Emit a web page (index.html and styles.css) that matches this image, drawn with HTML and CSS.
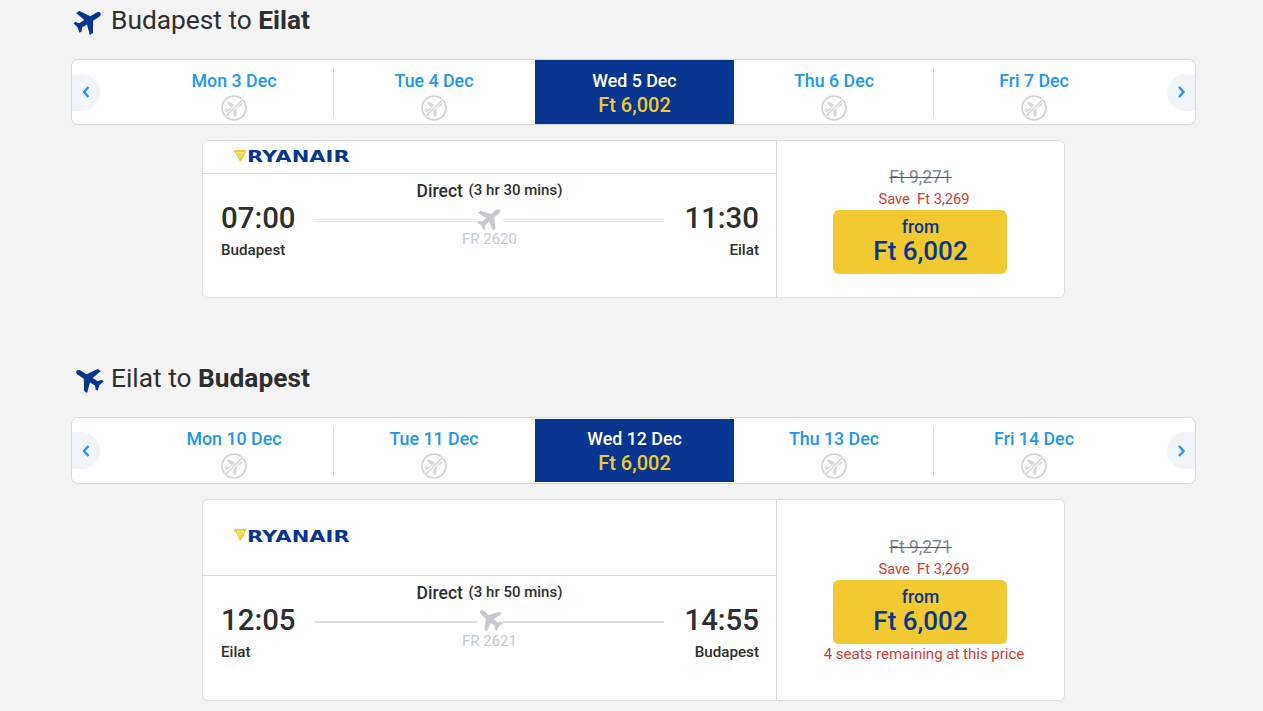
FILE: index.html
```html
<!DOCTYPE html>
<html lang="en">
<head>
    <meta charset="UTF-8">
    <meta name="viewport" content="width=device-width, initial-scale=1.0">
    <title>Select flights</title>
    <link rel="stylesheet" href="styles.css">
</head>
<body>
    <svg class="defs" width="0" height="0" aria-hidden="true">
        <symbol id="plane" viewBox="0 0 24 24">
            <path d="M12 1c1.200 0 2 1.500 2 3.200V9l8 5.200V17l-8-2.400v4.600l2.400 1.800V23L12 22l-4.400 1v-1.800l2.400-2v-4.600L2 17v-2.800L10 9V4.200C10 2.500 10.800 1 12 1z"/>
        </symbol>
        <symbol id="no-flight" viewBox="0 0 26 26">
            <circle cx="13" cy="13" r="11.900" fill="none" stroke="#d4d4d4" stroke-width="1.800"/>
            <g transform="rotate(62 13 13) translate(3 3) scale(.83)">
                <path fill="#d8d8d8" d="M12 1c1.200 0 2 1.500 2 3.200V9l8 5.200V17l-8-2.400v4.600l2.400 1.800V23L12 22l-4.400 1v-1.800l2.400-2v-4.600L2 17v-2.800L10 9V4.200C10 2.500 10.800 1 12 1z"/>
            </g>
            <path d="M4.500 21.500 21.500 4.500" stroke="#fff" stroke-width="3.400"/>
            <path d="M4.500 21.500 21.500 4.500" stroke="#d4d4d4" stroke-width="1.600"/>
        </symbol>
        <symbol id="harp" viewBox="0 0 14 12">
            <path fill="#f1c933" d="M0 1.500 2.500 0h11L12 4 8.500 10.500 7 12 5 8 3 3.500z"/>
            <path fill="#fbeeb0" d="M3.500 2h8L7.500 9.500z"/>
            <path fill="none" stroke="#f1c933" stroke-width=".7" d="M5.500 2l2 7.500M8 2 7.500 9.500M10 2 7.500 9.500M4.500 4.500h5.800"/>
        </symbol>
    </svg>

    <main class="page">
        <section class="leg leg-out">
            <h2 class="leg-title">
                <svg class="leg-icon leg-icon-out"><use href="#plane"/></svg>
                <span>Budapest to <strong>Eilat</strong></span>
            </h2>
            <div class="dates">
                <button class="arrow arrow-left"><svg viewBox="0 0 10 14"><path d="M7.500 2 3 7l4.500 5"/></svg></button>
                <div class="days">
                    <div class="day"><span class="day-name">Mon 3 Dec</span><svg class="day-none"><use href="#no-flight"/></svg></div>
                    <div class="day day-sep"><span class="day-name">Tue 4 Dec</span><svg class="day-none"><use href="#no-flight"/></svg></div>
                    <div class="day day-active"><span class="day-name">Wed 5 Dec</span><span class="day-price">Ft 6,002</span></div>
                    <div class="day"><span class="day-name">Thu 6 Dec</span><svg class="day-none"><use href="#no-flight"/></svg></div>
                    <div class="day day-sep"><span class="day-name">Fri 7 Dec</span><svg class="day-none"><use href="#no-flight"/></svg></div>
                </div>
                <button class="arrow arrow-right"><svg viewBox="0 0 10 14"><path d="M3 2l4.500 5L3 12"/></svg></button>
            </div>
            <div class="card">
                <div class="flight">
                    <div class="carrier">
                        <svg class="harp"><use href="#harp"/></svg>
                        <span class="carrier-name">RYANAIR</span>
                    </div>
                    <div class="route">
                        <div class="stop">
                            <div class="stop-time">07:00</div>
                            <div class="stop-city">Budapest</div>
                        </div>
                        <div class="path">
                            <div class="path-title"><b>Direct</b> <span>(3 hr 30 mins)</span></div>
                            <div class="path-line path-line-double">
                                <i class="path-seg"></i>
                                <svg class="path-plane path-plane-out"><use href="#plane"/></svg>
                                <i class="path-seg"></i>
                            </div>
                            <div class="path-code">FR 2620</div>
                        </div>
                        <div class="stop stop-end">
                            <div class="stop-time">11:30</div>
                            <div class="stop-city">Eilat</div>
                        </div>
                    </div>
                </div>
                <div class="fare">
                    <div class="fare-old">Ft 9,271</div>
                    <div class="fare-save">Save&nbsp; Ft 3,269</div>
                    <button class="fare-btn"><span class="fare-from">from</span><span class="fare-price">Ft 6,002</span></button>
                </div>
            </div>
        </section>

        <section class="leg leg-back">
            <h2 class="leg-title">
                <svg class="leg-icon leg-icon-back"><use href="#plane"/></svg>
                <span>Eilat to <strong>Budapest</strong></span>
            </h2>
            <div class="dates dates-tall">
                <button class="arrow arrow-left"><svg viewBox="0 0 10 14"><path d="M7.500 2 3 7l4.500 5"/></svg></button>
                <div class="days">
                    <div class="day"><span class="day-name">Mon 10 Dec</span><svg class="day-none"><use href="#no-flight"/></svg></div>
                    <div class="day day-sep"><span class="day-name">Tue 11 Dec</span><svg class="day-none"><use href="#no-flight"/></svg></div>
                    <div class="day day-active"><span class="day-name">Wed 12 Dec</span><span class="day-price">Ft 6,002</span></div>
                    <div class="day"><span class="day-name">Thu 13 Dec</span><svg class="day-none"><use href="#no-flight"/></svg></div>
                    <div class="day day-sep"><span class="day-name">Fri 14 Dec</span><svg class="day-none"><use href="#no-flight"/></svg></div>
                </div>
                <button class="arrow arrow-right"><svg viewBox="0 0 10 14"><path d="M3 2l4.500 5L3 12"/></svg></button>
            </div>
            <div class="card">
                <div class="flight">
                    <div class="carrier carrier-tall">
                        <svg class="harp"><use href="#harp"/></svg>
                        <span class="carrier-name">RYANAIR</span>
                    </div>
                    <div class="route route-tall">
                        <div class="stop">
                            <div class="stop-time">12:05</div>
                            <div class="stop-city">Eilat</div>
                        </div>
                        <div class="path">
                            <div class="path-title"><b>Direct</b> <span>(3 hr 50 mins)</span></div>
                            <div class="path-line">
                                <i class="path-seg"></i>
                                <svg class="path-plane path-plane-back"><use href="#plane"/></svg>
                                <i class="path-seg"></i>
                            </div>
                            <div class="path-code">FR 2621</div>
                        </div>
                        <div class="stop stop-end">
                            <div class="stop-time">14:55</div>
                            <div class="stop-city">Budapest</div>
                        </div>
                    </div>
                </div>
                <div class="fare">
                    <div class="fare-old">Ft 9,271</div>
                    <div class="fare-save">Save&nbsp; Ft 3,269</div>
                    <button class="fare-btn"><span class="fare-from">from</span><span class="fare-price">Ft 6,002</span></button>
                    <div class="fare-seats">4 seats remaining at this price</div>
                </div>
            </div>
        </section>
    </main>
</body>
</html>
```

FILE: styles.css
```css
* {
    box-sizing: border-box;
}

body {
    margin: 0;
    background-color: #f3f3f3;
    color: #2e2e2e;
    font-family: Roboto, "Liberation Sans", sans-serif;
    overflow: hidden;
}

.defs {
    position: absolute;
}

.page {
    width: 1125px;
    margin-left: 71px;
}

.leg-back {
    margin-top: 60px;
}

.leg-title {
    display: flex;
    align-items: center;
    height: 40px;
    margin: 0 0 19px;
    font-size: 26.3px;
    font-weight: 400;
}

.leg-title strong {
    font-weight: 700;
}

.leg-icon {
    width: 31px;
    height: 31px;
    margin: 1px 7.5px 0 1.5px;
    fill: #073590;
}

.leg-icon-out {
    transform: rotate(58deg);
}

.leg-icon-back {
    transform: rotate(-58deg);
}

/* date strip */
.dates {
    display: flex;
    align-items: center;
    justify-content: space-between;
    height: 66px;
    background: #fff;
    border: 1px solid #d8d8d8;
    border-radius: 7px;
}

.dates-tall {
    height: 67px;
}

.arrow {
    display: flex;
    align-items: center;
    justify-content: center;
    width: 28px;
    height: 37px;
    padding: 0;
    border: none;
    background: #f1f4f8;
}

.arrow svg {
    width: 10px;
    height: 14px;
    fill: none;
    stroke: #2196f3;
    stroke-width: 2.4;
}

.arrow-left {
    margin-right: 1px;
    border-radius: 0 19px 19px 0;
}

.arrow-right {
    border-radius: 19px 0 0 19px;
}

.days {
    display: flex;
    align-self: stretch;
    width: 1000px;
}

.dates-tall .days {
    margin: 1px 0;
}

.day {
    position: relative;
    display: flex;
    flex-direction: column;
    align-items: center;
    width: 200px;
    padding-top: 11px;
}

.dates-tall .day {
    padding-top: 10px;
}

.day-sep::before {
    content: "";
    position: absolute;
    left: -1px;
    top: 8px;
    bottom: 6px;
    width: 1px;
    background: #dcdcdc;
}

.day-name {
    color: #2196f3;
    font-size: 17.8px;
    font-weight: 500;
    line-height: 20px;
}

.day-none {
    width: 26px;
    height: 26px;
    margin-top: 4px;
}

.day-active {
    width: 199px;
    margin-left: 1px;
    background: #073590;
}

.day-active .day-name {
    color: #fff;
}

.day-price {
    margin-top: 2px;
    color: #f1c933;
    font-size: 20px;
    font-weight: 500;
    line-height: 24px;
}

/* flight card */
.card {
    display: flex;
    width: 863px;
    margin: 15px auto 0;
    background: #fff;
    border: 1px solid #dbdfe5;
    border-radius: 6px;
}

.flight {
    flex: 1;
    border-right: 1px solid #d5d9df;
}

.carrier {
    display: flex;
    align-items: center;
    height: 33px;
    padding-left: 30px;
    border-bottom: 1px solid #dbdfe5;
}

.carrier-tall {
    height: 76px;
    padding-bottom: 2px;
}

.harp {
    width: 14px;
    height: 12px;
    margin-bottom: 3px;
}

.carrier-name {
    color: #073590;
    font-family: "DejaVu Sans", sans-serif;
    font-size: 15.5px;
    font-weight: 700;
    transform: scaleX(1.36);
    transform-origin: left center;
}

.route {
    display: grid;
    grid-template-columns: auto 1fr auto;
    column-gap: 20px;
    height: 123px;
    padding: 0 17px 0 18px;
}

.route-tall {
    height: 124px;
}

.stop {
    padding-top: 26px;
}

.stop-end {
    text-align: right;
}

.stop-time {
    font-size: 29.4px;
    font-weight: 500;
    line-height: 36px;
}

.stop-city {
    margin-top: 5px;
    font-size: 15.2px;
    font-weight: 500;
    line-height: 18px;
}

.path {
    margin-left: -1px;
    padding-top: 6px;
    text-align: center;
}

.path-title {
    font-size: 15px;
    line-height: 22px;
}

.path-title b {
    font-size: 17.5px;
    font-weight: 500;
}

.path-title span {
    position: relative;
    top: -2px;
    margin-left: 2px;
    font-weight: 500;
}

.path-line {
    display: flex;
    align-items: center;
    height: 2px;
    margin-top: 16px;
}

.path-seg {
    flex: 1;
    height: 2px;
    background: #d8dbe1;
}

.path-line-double {
    height: 3px;
}

.path-line-double .path-seg {
    height: 3px;
    background: #fff;
    border-top: 1px solid #e3e5e9;
    border-bottom: 1px solid #e0e2e7;
}

.path-line-double + .path-code {
    margin-top: 8px;
}

.path-plane {
    flex: none;
    width: 28px;
    height: 28px;
    margin: -17px -1px -11px;
    fill: #c5cad0;
}

.path-plane-out {
    transform: rotate(50deg);
}

.path-plane-back {
    transform: rotate(-50deg);
}

.path-code {
    margin-top: 9px;
    color: #c5cad0;
    font-size: 15px;
    line-height: 18px;
}

/* fare column */
.fare {
    display: flex;
    flex-direction: column;
    align-items: center;
    justify-content: center;
    width: 287px;
    padding-top: 3px;
}

.fare-old {
    color: #7d8894;
    font-size: 17.5px;
    line-height: 20px;
    text-decoration: line-through;
    text-decoration-color: #d0281f;
}

.fare-save {
    margin: 3px 0 0 7px;
    color: #cf3a33;
    font-size: 14.7px;
    line-height: 18px;
}

.fare-btn {
    display: flex;
    flex-direction: column;
    align-items: center;
    width: 174px;
    height: 64px;
    margin: 2px 0 0 -1px;
    padding: 7px 0 0 1px;
    border: none;
    border-radius: 6px;
    background: #f2c931;
    color: #073590;
    font-family: inherit;
    font-weight: 500;
}

.fare-from {
    font-size: 17.5px;
    line-height: 20px;
}

.fare-price {
    font-size: 26px;
    line-height: 29px;
}

.fare-seats {
    margin: 1px 0 0 7px;
    padding-bottom: 3px;
    color: #cf3a33;
    font-size: 15px;
    line-height: 18px;
}
```
